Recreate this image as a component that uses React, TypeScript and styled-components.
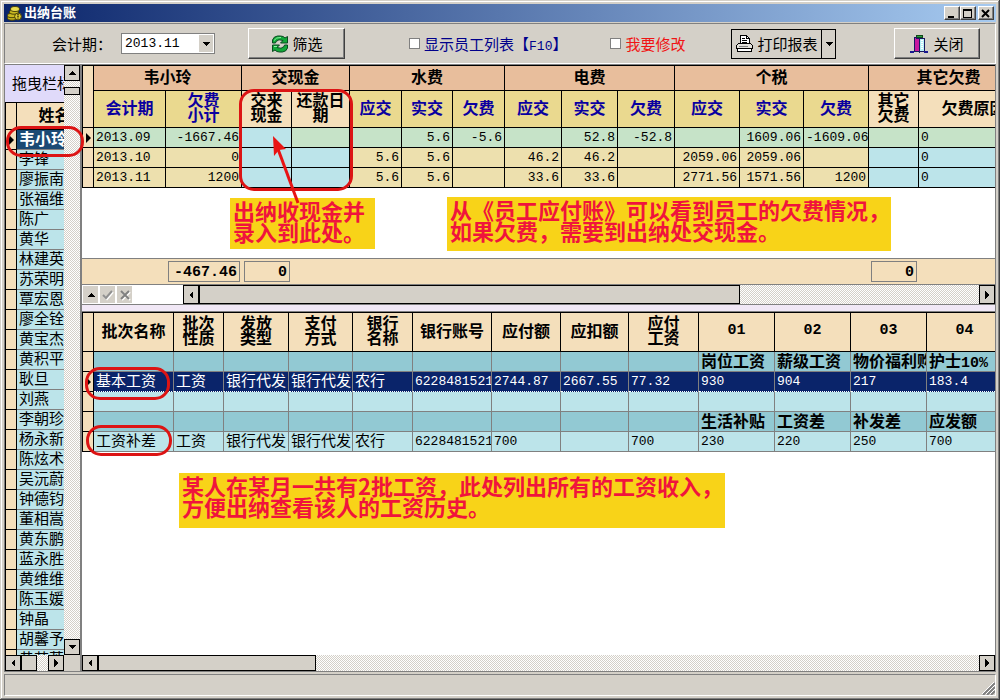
import React from 'react';
import styled, { createGlobalStyle, css } from 'styled-components';

const CJK = '"Noto Sans CJK SC", sans-serif';
const MONO = '"Liberation Mono", "Noto Sans CJK SC", monospace';

const face = '#d4d0c8';
const shade = '#808080';
const wheat = '#f4dfbb';
const peach = '#e8be9c';
const khaki = '#ead98f';
const sand = '#ede0ae';
const sky = '#bce4ea';
const mint = '#c6e3c8';
const teal = '#92c9d3';
const navy = '#0a246a';

const GlobalStyle = createGlobalStyle`
  * { box-sizing: border-box; }
  body { margin: 0; background: ${face}; font: 15px/18px ${CJK}; color: #000; }
  button, select, input { font: inherit; color: inherit; margin: 0; padding: 0; }
`;

const Window = styled.div`
  height: 100vh;
  display: flex;
  flex-direction: column;
  padding: 4px;
  background: ${face};
  overflow: hidden;
  box-shadow: inset -1px -1px #404040, inset 1px 1px ${face}, inset -2px -2px ${shade}, inset 2px 2px #fff;
`;

const TitleBar = styled.header`
  flex: none;
  display: flex;
  align-items: center;
  height: 18px;
  margin-bottom: 1px;
  padding: 0 2px 0 3px;
  background: linear-gradient(90deg, ${navy}, #a6caf0);
  svg { flex: none; }
`;

const Title = styled.h1`
  flex: 1;
  margin: 0 0 0 2px;
  font-size: 13px;
  line-height: 16px;
  padding-bottom: 2px;
  font-weight: bold;
  color: #fff;
`;

const raised = css`
  background: ${face};
  border: 1px solid;
  border-color: #fff #404040 #404040 #fff;
  box-shadow: inset -1px -1px ${shade};
`;

const CaptionButton = styled.button<{ $gap?: boolean }>`
  ${raised}
  display: flex;
  width: 16px;
  height: 14px;
  margin-left: ${p => (p.$gap ? 2 : 0)}px;
  align-items: center;
  justify-content: center;
`;

const Toolbar = styled.div`
  flex: none;
  display: flex;
  align-items: center;
  height: 41px;
  padding: 0 15px 0 47px;
  border: 1px solid;
  border-color: ${shade} #fff #fff ${shade};
  white-space: nowrap;
`;

const Field = styled.label`
  display: flex;
  align-items: center;
  gap: 9px;
`;

const SelectBox = styled.span`
  position: relative;
  display: block;
`;

const Select = styled.select`
  appearance: none;
  display: block;
  width: 94px;
  height: 21px;
  padding-left: 3px;
  border: 1px solid ${shade};
  border-radius: 0;
  background: #fff;
  font: 13px/18px ${MONO};
`;

const SelectArrow = styled.span`
  position: absolute;
  inset: 2px 2px 2px auto;
  width: 14px;
  display: flex;
  align-items: center;
  justify-content: center;
  background: ${face};
  pointer-events: none;
`;

const PushButton = styled.button<{ $width: number }>`
  ${raised}
  display: flex;
  align-items: center;
  justify-content: center;
  gap: 4px;
  width: ${p => p.$width}px;
  height: 31px;
`;

const FilterButton = styled(PushButton)`margin-left: 33px;`;
const CloseButton = styled(PushButton)`margin-left: auto;`;

const Check = styled.label<{ $color: string; $left: number }>`
  display: flex;
  align-items: center;
  gap: 4px;
  margin-left: ${p => p.$left}px;
  color: ${p => p.$color};
  input {
    appearance: none;
    width: 11px;
    height: 11px;
    border: 1px solid ${shade};
    background: #fff;
  }
`;

const SplitButton = styled.div`
  display: flex;
  height: 30px;
  margin-left: 46px;
  border: 1px solid #000;
  button {
    display: flex;
    align-items: center;
    justify-content: center;
    gap: 4px;
    border: 0;
    background: ${face};
  }
  button:first-child { width: 89px; }
  button:last-child { width: 14px; border-left: 1px solid #000; }
`;

const Body = styled.main`
  flex: 1;
  min-height: 0;
  display: flex;
  border: 1px solid ${shade};
`;

const Sidebar = styled.aside`
  position: relative;
  flex: none;
  width: 75px;
  display: flex;
  flex-direction: column;
`;

const SideMain = styled.div`
  flex: 1;
  min-height: 0;
  display: flex;
`;

const SideList = styled.div`
  flex: 1;
  min-width: 0;
  overflow: hidden;
  background: #fff;
`;

const GroupHint = styled.div`
  height: 37px;
  padding-left: 7px;
  line-height: 35px;
  white-space: nowrap;
  background: #e0dafa;
`;

const Divider = styled.div`
  flex: none;
  width: 2px;
  background: ${shade};
`;

const Work = styled.div`
  flex: 1;
  min-width: 0;
  display: flex;
  flex-direction: column;
`;

const Pane = styled.section<{ $height?: number }>`
  position: relative;
  display: flex;
  flex-direction: column;
  min-height: 0;
  flex: ${p => (p.$height ? `none` : '1')};
  height: ${p => (p.$height ? `${p.$height}px` : 'auto')};
  background: #fff;
`;

const GridArea = styled.div`
  flex: 1;
  min-height: 0;
  overflow: hidden;
`;

const Splitter = styled.div`
  flex: none;
  height: 8px;
  border: 1px solid ${shade};
  border-width: 1px 0;
  background: #f1e8f6;
`;

const Table = styled.table<{ $width: number }>`
  table-layout: fixed;
  width: ${p => p.$width}px;
  border-spacing: 0;
  border-top: 1px solid #000;
  border-left: 1px solid #000;
`;

const Th = styled.th<{ $bg?: string; $blue?: boolean; $height: number; $num?: boolean }>`
  height: ${p => p.$height}px;
  padding: 0 0 4px;
  overflow: hidden;
  white-space: pre;
  border: 0 solid #000;
  border-width: 0 1px 1px 0;
  background: ${p => p.$bg ?? wheat};
  color: ${p => (p.$blue ? '#0a00a0' : '#000')};
  font: ${p => (p.$num ? `bold 15px/15px ${MONO}` : `bold 16px/15px ${CJK}`)};
`;

const Td = styled.td<{ $bg: string; $line?: string; $right?: boolean; $num?: boolean; $bold?: boolean; $color?: string }>`
  height: 20px;
  padding: ${p => (p.$num ? '1px 2px 0' : '0 2px 3px')};
  overflow: hidden;
  white-space: nowrap;
  border: 0 solid ${p => p.$line ?? '#000'};
  border-width: 0 1px 1px 0;
  background: ${p => p.$bg};
  color: ${p => p.$color ?? '#000'};
  text-align: ${p => (p.$right ? 'right' : 'left')};
  font: ${p => (p.$num ? `13px/16px ${MONO}` : p.$bold ? `bold 16px/16px ${CJK}` : `15px/16px ${CJK}`)};
`;

const SelectedTd = styled(Td)`
  border-bottom: 1px dotted #fff;
`;

const Marker = styled.td`
  height: 20px;
  padding: 0;
  border: 0 solid #000;
  border-width: 0 1px 1px 0;
  background: ${wheat};
  line-height: 0;
`;

const Num = styled.span<{ $size: number }>`
  font-family: ${MONO};
  font-size: ${p => p.$size}px;
  line-height: 0;
`;

const Footer = styled.div`
  flex: none;
  display: flex;
  align-items: center;
  height: 27px;
  padding-left: 86px;
  border: 1px solid ${shade};
  border-width: 1px 0;
  background: ${wheat};
`;

const Total = styled.output<{ $width: number; $left: number }>`
  width: ${p => p.$width}px;
  height: 21px;
  margin-left: ${p => p.$left}px;
  padding-right: 2px;
  border: 1px solid ${shade};
  text-align: right;
  font: bold 15px/21px ${MONO};
`;

const NavRow = styled.div`
  flex: none;
  display: flex;
  height: 19px;
`;

const NavButtons = styled.div`
  flex: none;
  display: flex;
  gap: 2px;
  width: 101px;
  padding: 1px;
  button {
    display: flex;
    align-items: center;
    justify-content: center;
    width: 15px;
    border: 0;
    background: ${face};
  }
`;

const Track = styled.div<{ $vertical?: boolean }>`
  flex: ${p => (p.$vertical ? 'none' : '1')};
  display: flex;
  min-width: 0;
  flex-direction: ${p => (p.$vertical ? 'column' : 'row')};
  background: repeating-conic-gradient(${face} 0 25%, #fff 0 50%) 0 0 / 2px 2px;
`;

const ScrollButton = styled.button`
  flex: none;
  display: flex;
  align-items: center;
  justify-content: center;
  width: 16px;
  height: 100%;
  border: 1px solid #000;
  background: ${face};
`;

const VScrollButton = styled(ScrollButton)`
  height: 16px;
`;

const Thumb = styled.div<{ $width: number; $height?: number }>`
  flex: none;
  width: ${p => p.$width}px;
  height: ${p => (p.$height ? `${p.$height}px` : '100%')};
  border: 1px solid #000;
  background: ${face};
`;

const Gap = styled.div<{ $size?: number }>`
  flex: ${p => (p.$size ? 'none' : '1')};
  height: ${p => (p.$size ? `${p.$size}px` : 'auto')};
`;

const HScroll = styled.div`
  flex: none;
  display: flex;
  height: 16px;
`;

const Corner = styled.div`
  flex: none;
  width: 16px;
  background: ${face};
`;

const StatusBar = styled.footer`
  flex: none;
  display: flex;
  align-items: flex-end;
  justify-content: flex-end;
  height: 22px;
  margin-top: 2px;
  border: 1px solid;
  border-color: ${shade} #fff #fff ${shade};
`;

const Ring = styled.div<{ $x: number; $y: number; $w: number; $h: number }>`
  position: absolute;
  z-index: 2;
  left: ${p => p.$x}px;
  top: ${p => p.$y}px;
  width: ${p => p.$w}px;
  height: ${p => p.$h}px;
  border: 3px solid #dc1414;
  border-radius: 15px;
  pointer-events: none;
`;

const Note = styled.p<{ $x: number; $y: number; $w: number; $h: number }>`
  position: absolute;
  left: ${p => p.$x}px;
  top: ${p => p.$y}px;
  width: ${p => p.$w}px;
  height: ${p => p.$h}px;
  margin: 0;
  padding: 2px 3px;
  background: #f8d318;
  color: #f0143c;
  font: bold 22px/21px ${CJK};
  white-space: pre;
`;

const Arrow = styled.svg`
  position: absolute;
  z-index: 1;
  left: 182px;
  top: 68px;
  pointer-events: none;
`;

type Dir = 'up' | 'down' | 'left' | 'right';
const shapes: Record<Dir, string> = {
  up: 'M0 6 4 2 8 6z',
  down: 'M0 2h8L4 6z',
  left: 'M6 0v8L2 4z',
  right: 'M2 0v8l4-4z',
};
const Tri = ({ dir }: { dir: Dir }) => (
  <svg width="8" height="8" viewBox="0 0 8 8" shapeRendering="crispEdges" aria-hidden="true">
    <path d={shapes[dir]} />
  </svg>
);

const Pointer = () => (
  <svg width="10" height="10" viewBox="0 0 10 10" aria-hidden="true">
    <path d="M3 0v10l5-5z" />
  </svg>
);

const CoinsIcon = () => (
  <svg width="15" height="16" viewBox="0 0 15 16" aria-hidden="true">
    <g fill="#c8b820" stroke="#4a4208">
      <ellipse cx="5" cy="13" rx="4.5" ry="2.2" />
      <ellipse cx="5" cy="10.500" rx="4.500" ry="2.200" />
      <ellipse cx="7" cy="7" rx="4.500" ry="2.200" />
      <ellipse cx="8" cy="4" rx="4.500" ry="2.500" fill="#e8dc50" />
      <circle cx="11" cy="11.500" r="3.400" fill="#d8c830" />
    </g>
    <path d="M10 9.500h2M10 11.500h2M11 9v5" stroke="#6a6010" />
  </svg>
);

const RefreshIcon = () => (
  <svg width="18" height="18" viewBox="0 0 18 18" aria-hidden="true">
    <path d="M1.500 8V5q1-3.500 5-4h3q3 0 4.500 2l2.500-1.500V8h-7l2.500-2.500Q7.500 3.500 5 6.500L4.500 8z" fill="#12a838" stroke="#0a4a20" />
    <path d="M16.500 10v3q-1 3.500-5 4h-3q-3 0-4.500-2l-2.500 1.500V10h7l-2.500 2.500q4.500 2 7-1l.5-1.500z" fill="#12a838" stroke="#0a4a20" />
    <path d="M3 5.500q2-3.500 7-3M3 11.500h3" fill="none" stroke="#8cf0a0" />
  </svg>
);

const PrinterIcon = () => (
  <svg width="17" height="17" viewBox="0 0 17 17" shapeRendering="crispEdges" aria-hidden="true">
    <path d="M4.500 8.500v-8h6l3 3v5" fill="#fff" stroke="#000" />
    <path d="M10.500.500v3h3M6 3.500h3M6 5.500h5M6 7.500h5" fill="none" stroke="#000" />
    <path d="M2.500 8.500h12l2 2v3h-16v-3z" fill="#e4e2dc" stroke="#000" />
    <path d="M1.500 13.500h14v3h-14z" fill="#fff" stroke="#000" />
    <path d="M3 11.500h9" stroke="#808080" />
  </svg>
);

const ExitIcon = () => (
  <svg width="19" height="18" viewBox="0 0 19 18" shapeRendering="crispEdges" aria-hidden="true">
    <path d="M6 0h6v2H6z" fill="#28a040" stroke="#104818" />
    <path d="M5 3h9v13H5z" fill="#b8f0f8" stroke="#181860" />
    <path d="M4 2l5 2v13l-5-1z" fill="#c818a0" stroke="#181860" />
    <path d="M0 16.500h4M14 16.500h4" stroke="#181890" strokeWidth="2" />
    <path d="M11 5v9M12.500 5v9" stroke="#fff" strokeDasharray="1 1" />
  </svg>
);

const names = [
  '韦小玲', '李锋', '廖振南', '张福维', '陈广', '黄华', '林建英', '苏荣明', '覃宏恩', '廖全铨',
  '黄宝杰', '黄积平', '耿旦', '刘燕', '李朝珍', '杨永新', '陈炫术', '吴沅蔚', '钟德钧', '董相嵩',
  '黄东鹏', '蓝永胜', '黄维维', '陈玉媛', '钟晶', '胡馨予', '黄若英',
];

const sum = (list: number[]) => list.reduce((a, b) => a + b, 1);

const Cols = ({ widths }: { widths: number[] }) => (
  <colgroup>{widths.map((w, i) => <col key={i} style={{ width: w }} />)}</colgroup>
);

const duesWidths = [11, 72, 76, 50, 58, 52, 51, 52, 57, 56, 57, 65, 64, 65, 50, 110];
const duesGroups: [string, number][] = [['韦小玲', 2], ['交现金', 2], ['水费', 3], ['电费', 3], ['个税', 3], ['其它欠费', 2]];
const duesHeads = ['会计期', '欠费\n小计', '交来\n现金', '还款日\n期', '应交', '实交', '欠费', '应交', '实交', '欠费', '应交', '实交', '欠费', '其它\n欠费', '欠费原因'];
const entryCols = [2, 3, 13, 14];
const duesRows = [
  ['2013.09', '-1667.46', '', '', '', '5.6', '-5.6', '', '52.8', '-52.8', '', '1609.06', '-1609.06', '', '0'],
  ['2013.10', '0', '', '', '5.6', '5.6', '', '46.2', '46.2', '', '2059.06', '2059.06', '', '', '0'],
  ['2013.11', '1200', '', '', '5.6', '5.6', '', '33.6', '33.6', '', '2771.56', '1571.56', '1200', '', '0'],
];

const duesColor = (row: number, col: number) => {
  if (row === 0) return col === 2 ? sky : mint;
  return entryCols.includes(col) ? sky : sand;
};

const payWidths = [11, 80, 50, 65, 64, 60, 79, 69, 68, 70, 76, 76, 76, 76];
const payHeads = ['批次名称', '批次\n性质', '发放\n类型', '支付\n方式', '银行\n名称', '银行账号', '应付额', '应扣额', '应付\n工资', '01', '02', '03', '04'];
const blank = Array(9).fill('');
type PayRow = { kind: 'band' | 'selected' | 'plain'; cells: string[] };
const payRows: PayRow[] = [
  { kind: 'band', cells: [...blank, '岗位工资', '薪级工资', '物价福利购', '护士10%'] },
  { kind: 'selected', cells: ['基本工资', '工资', '银行代发', '银行代发', '农行', '6228481521', '2744.87', '2667.55', '77.32', '930', '904', '217', '183.4'] },
  { kind: 'plain', cells: [...blank, '', '', '', ''] },
  { kind: 'band', cells: [...blank, '生活补贴', '工资差', '补发差', '应发额'] },
  { kind: 'plain', cells: ['工资补差', '工资', '银行代发', '银行代发', '农行', '6228481521', '700', '', '700', '230', '220', '250', '700'] },
];

const isNumber = (text: string) => /^[-\d.]+$/.test(text);

const Mixed = ({ text, size }: { text: string; size: number }) => (
  <>
    {text.split(/([A-Z]?\d+%?)/).map((part, i) => (i % 2 ? <Num key={i} $size={size}>{part}</Num> : part))}
  </>
);

function EmployeeList() {
  return (
    <Sidebar>
      <SideMain>
        <SideList>
          <GroupHint>拖曳栏标题</GroupHint>
          <Table $width={88}>
            <Cols widths={[11, 76]} />
            <thead>
              <tr><Th $height={27} /><Th $height={27}>姓名</Th></tr>
            </thead>
            <tbody>
              {names.map((name, i) => (
                <tr key={name}>
                  <Marker>{i === 0 && <Pointer />}</Marker>
                  <Td $bg={i ? sky : '#1b4a74'} $color={i ? '#000' : '#fff'} $bold={i === 0} $line={shade}>{name}</Td>
                </tr>
              ))}
            </tbody>
          </Table>
        </SideList>
        <Track $vertical>
          <VScrollButton aria-label="向上"><Tri dir="up" /></VScrollButton>
          <Gap $size={6} />
          <Thumb $width={16} $height={8} />
          <Gap />
          <VScrollButton aria-label="向下"><Tri dir="down" /></VScrollButton>
        </Track>
      </SideMain>
      <HScroll>
        <Track>
          <ScrollButton aria-label="向左"><Tri dir="left" /></ScrollButton>
          <Thumb $width={16} />
          <Gap />
          <ScrollButton aria-label="向右"><Tri dir="right" /></ScrollButton>
        </Track>
        <Corner />
      </HScroll>
      <Ring $x={1} $y={61} $w={78} $h={31} />
    </Sidebar>
  );
}

function DuesPane() {
  return (
    <Pane $height={239}>
      <GridArea>
        <Table $width={sum(duesWidths)}>
          <Cols widths={duesWidths} />
          <thead>
            <tr>
              <Th $height={62} rowSpan={2} />
              {duesGroups.map(([label, span]) => <Th key={label} $height={25} $bg={peach} colSpan={span}>{label}</Th>)}
            </tr>
            <tr>
              {duesHeads.map((label, i) => (
                <Th key={i} $height={37} $bg={entryCols.includes(i) ? wheat : khaki} $blue={!entryCols.includes(i)}>{label}</Th>
              ))}
            </tr>
          </thead>
          <tbody>
            {duesRows.map((row, r) => (
              <tr key={r}>
                <Marker>{r === 0 && <Pointer />}</Marker>
                {row.map((cell, c) => (
                  <Td key={c} $num $bg={duesColor(r, c)} $right={c > 0 && c < 14}>{cell}</Td>
                ))}
              </tr>
            ))}
          </tbody>
        </Table>
      </GridArea>
      <Footer>
        <Total $width={72} $left={0}>-467.46</Total>
        <Total $width={46} $left={4}>0</Total>
        <Total $width={46} $left={581}>0</Total>
      </Footer>
      <NavRow>
        <NavButtons>
          <button aria-label="上一条"><Tri dir="up" /></button>
          <button aria-label="保存">
            <svg width="12" height="12" viewBox="0 0 12 12" fill="none" strokeWidth="2" aria-hidden="true">
              <path d="M2 7l3 3 6-7" stroke="#fff" /><path d="M1 6l3 3 6-7" stroke="#909090" />
            </svg>
          </button>
          <button aria-label="取消">
            <svg width="12" height="12" viewBox="0 0 12 12" fill="none" strokeWidth="2" aria-hidden="true">
              <path d="M3 3l8 8m0-8l-8 8" stroke="#fff" /><path d="M2 2l8 8m0-8l-8 8" stroke="#808080" />
            </svg>
          </button>
        </NavButtons>
        <Track>
          <ScrollButton aria-label="向左"><Tri dir="left" /></ScrollButton>
          <Thumb $width={541} />
          <Gap />
          <ScrollButton aria-label="向右"><Tri dir="right" /></ScrollButton>
        </Track>
      </NavRow>
      <Ring $x={157} $y={24} $w={114} $h={102} />
      <Note $x={148} $y={133} $w={145} $h={51}>{'出纳收现金并\n录入到此处。'}</Note>
      <Note $x={365} $y={132} $w={444} $h={54}>{'从《员工应付账》可以看到员工的欠费情况，\n如果欠费，需要到出纳处交现金。'}</Note>
      <Arrow width="44" height="74" viewBox="0 0 44 74" aria-hidden="true">
        <path d="M34 70 14 16" stroke="#e81414" strokeWidth="3" />
        <path d="M9 3l13 13-7 1-5 6z" fill="#e81414" />
      </Arrow>
    </Pane>
  );
}

function PayrollPane() {
  return (
    <Pane>
      <GridArea>
        <Table $width={sum(payWidths)}>
          <Cols widths={payWidths} />
          <thead>
            <tr>
              <Th $height={39} />
              {payHeads.map(label => <Th key={label} $height={39} $num={isNumber(label)}>{label}</Th>)}
            </tr>
          </thead>
          <tbody>
            {payRows.map((row, r) => {
              const Cell = row.kind === 'selected' ? SelectedTd : Td;
              const bg = { band: teal, selected: navy, plain: sky }[row.kind];
              return (
                <tr key={r}>
                  <Marker>{row.kind === 'selected' && <Pointer />}</Marker>
                  {row.cells.map((cell, c) => (
                    <Cell
                      key={c}
                      $bg={bg}
                      $line={shade}
                      $bold={row.kind === 'band'}
                      $num={isNumber(cell)}
                      $color={row.kind === 'selected' ? '#fff' : '#000'}
                    >
                      <Mixed text={cell} size={row.kind === 'band' ? 15 : 13} />
                    </Cell>
                  ))}
                </tr>
              );
            })}
          </tbody>
        </Table>
      </GridArea>
      <HScroll>
        <Track>
          <ScrollButton aria-label="向左"><Tri dir="left" /></ScrollButton>
          <Thumb $width={218} />
          <Gap />
          <ScrollButton aria-label="向右"><Tri dir="right" /></ScrollButton>
        </Track>
      </HScroll>
      <Ring $x={3} $y={55} $w={85} $h={33} />
      <Ring $x={4} $y={113} $w={86} $h={31} />
      <Note $x={97} $y={161} $w={546} $h={55}>{'某人在某月一共有2批工资，此处列出所有的工资收入，\n方便出纳查看该人的工资历史。'}</Note>
    </Pane>
  );
}

export default function App() {
  return (
    <>
      <GlobalStyle />
      <Window>
        <TitleBar>
          <CoinsIcon />
          <Title>出纳台账</Title>
          <CaptionButton aria-label="最小化"><svg width="10" height="9"><path d="M1 7h6v2H1z" /></svg></CaptionButton>
          <CaptionButton aria-label="最大化">
            <svg width="10" height="9" shapeRendering="crispEdges"><path d="M.5 1h8v7.500h-8z" fill="none" stroke="#000" /><path d="M0 0h9v2H0z" /></svg>
          </CaptionButton>
          <CaptionButton aria-label="关闭窗口" $gap>
            <svg width="10" height="9"><path d="M1 1l7 7m0-7L1 8" stroke="#000" strokeWidth="2" /></svg>
          </CaptionButton>
        </TitleBar>
        <Toolbar>
          <Field>
            会计期：
            <SelectBox>
              <Select defaultValue="2013.11"><option>2013.11</option></Select>
              <SelectArrow><Tri dir="down" /></SelectArrow>
            </SelectBox>
          </Field>
          <FilterButton $width={97}><RefreshIcon />筛选</FilterButton>
          <Check $color="#00008b" $left={64}><input type="checkbox" /><span><Mixed text="显示员工列表【F10】" size={13} /></span></Check>
          <Check $color="#f01414" $left={43}><input type="checkbox" />我要修改</Check>
          <SplitButton>
            <button><PrinterIcon />打印报表</button>
            <button aria-label="更多打印选项"><Tri dir="down" /></button>
          </SplitButton>
          <CloseButton $width={86}><ExitIcon />关闭</CloseButton>
        </Toolbar>
        <Body>
          <EmployeeList />
          <Divider />
          <Work>
            <DuesPane />
            <Splitter />
            <PayrollPane />
          </Work>
        </Body>
        <StatusBar>
          <svg width="13" height="13" viewBox="0 0 13 13" aria-hidden="true">
            <path d="M1 13 13 1M5 13l8-8M9 13l4-4" stroke="#808080" strokeWidth="2" />
            <path d="M0 12 12 0M4 12l9-9M8 12l5-5" stroke="#fff" />
          </svg>
        </StatusBar>
      </Window>
    </>
  );
}
